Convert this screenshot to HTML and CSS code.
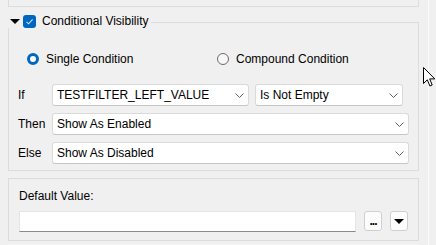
FILE: index.html
```html
<!DOCTYPE html>
<html>
<head>
    <title>Conditional Visibility</title>
    <link rel="stylesheet" href="styles.css">
</head>
<body>

<div class="panel">
    <div class="top-box"></div>

    <div class="group">
        <div class="group-head">
            <span class="caret"></span>
            <span class="check">
                <svg width="13" height="13" viewBox="0 0 13 13"><path d="M3.5 6.8 L5.6 8.8 L9.6 4.4" fill="none" stroke="#cfe3f7" stroke-width="1.1"/></svg>
            </span>
            <span class="group-title">Conditional Visibility</span>
            <span class="head-line"></span>
        </div>
        <div class="group-body">
            <div class="radios">
                <label class="radio-item"><span class="radio on"></span>Single Condition</label>
                <label class="radio-item"><span class="radio"></span>Compound Condition</label>
            </div>

            <div class="row">
                <span class="row-label">If</span>
                <div class="combo combo-left">
                    <span>TESTFILTER_LEFT_VALUE</span>
                    <svg class="chev" width="9" height="5" viewBox="0 0 9 5"><path d="M0.5 0.5 L4.5 4.5 L8.5 0.5" fill="none" stroke="#606060" stroke-width="1"/></svg>
                </div>
                <div class="combo combo-op">
                    <span>Is Not Empty</span>
                    <svg class="chev" width="9" height="5" viewBox="0 0 9 5"><path d="M0.5 0.5 L4.5 4.5 L8.5 0.5" fill="none" stroke="#606060" stroke-width="1"/></svg>
                </div>
            </div>

            <div class="row">
                <span class="row-label">Then</span>
                <div class="combo combo-wide">
                    <span>Show As Enabled</span>
                    <svg class="chev" width="9" height="5" viewBox="0 0 9 5"><path d="M0.5 0.5 L4.5 4.5 L8.5 0.5" fill="none" stroke="#606060" stroke-width="1"/></svg>
                </div>
            </div>

            <div class="row">
                <span class="row-label">Else</span>
                <div class="combo combo-wide">
                    <span>Show As Disabled</span>
                    <svg class="chev" width="9" height="5" viewBox="0 0 9 5"><path d="M0.5 0.5 L4.5 4.5 L8.5 0.5" fill="none" stroke="#606060" stroke-width="1"/></svg>
                </div>
            </div>
        </div>
    </div>

    <div class="group2">
        <div class="field-label">Default Value:</div>
        <div class="field-row">
            <div class="textbox"></div>
            <button class="small-btn dots">...</button>
            <button class="small-btn"><span class="down"></span></button>
        </div>
    </div>
</div>

<svg class="cursor" width="13" height="21" viewBox="0 0 13 21">
    <path d="M0.5 0.5 L0.5 16.5 L4.3 12.8 L6.9 19 L9.2 18 L6.7 11.9 L11.8 11.9 Z" fill="#fff" stroke="#000" stroke-width="1" stroke-linejoin="miter"/>
</svg>

</body>
</html>
```

FILE: styles.css
```css
body {
    margin: 0;
    background-color: #f0f0f0;
    font-family: "Liberation Sans", Arial, sans-serif;
    font-size: 12px;
    color: #000;
}

.panel {
    box-sizing: border-box;
    width: 429px;
    height: 245px;
    padding-left: 8px;
    border-right: 1px solid #fbfbfb;
}

.top-box {
    box-sizing: border-box;
    width: 411px;
    height: 7px;
    border: 1px solid #dcdcdc;
    border-top: none;
}

/* conditional visibility group */
.group {
    margin-top: 8px;
    width: 411px;
}

.group-head {
    display: flex;
    align-items: center;
    height: 13px;
    line-height: 13px;
}

.caret {
    width: 0;
    height: 0;
    margin-left: 2px;
    border-left: 5px solid transparent;
    border-right: 5px solid transparent;
    border-top: 5px solid #000;
}

.check {
    display: block;
    width: 13px;
    height: 13px;
    margin-left: 3px;
    border-radius: 3px;
    background-color: #0067c0;
}

.check svg {
    display: block;
}

.group-title {
    margin-left: 6px;
}

.head-line {
    box-sizing: border-box;
    flex: 1;
    align-self: flex-end;
    height: 6px;
    margin-left: 2px;
    border-top: 1px solid #dcdcdc;
    border-right: 1px solid #dcdcdc;
}

.group-body {
    box-sizing: border-box;
    height: 143px;
    border: 1px solid #dcdcdc;
    border-top: none;
}

.radios {
    display: flex;
    padding-top: 23px;
    padding-left: 18px;
    height: 16px;
    line-height: 16px;
}

.radio-item {
    display: flex;
    align-items: center;
    width: 190px;
}

.radio {
    box-sizing: border-box;
    width: 12px;
    height: 12px;
    margin-right: 7px;
    border-radius: 50%;
    border: 1px solid #6b6b6b;
    background-color: #f7f7f7;
}

.radio.on {
    border: 3.5px solid #0067c0;
    background-color: #fff;
}

.row {
    display: flex;
    align-items: center;
    margin-top: 7px;
    padding-left: 9px;
    height: 22px;
}

.radios + .row {
    margin-top: 17px;
}

.row-label {
    width: 34px;
}

.combo {
    box-sizing: border-box;
    display: flex;
    align-items: center;
    justify-content: space-between;
    height: 22px;
    padding-left: 4px;
    background-color: #fff;
    border: 1px solid #dadada;
    border-bottom-color: #c6c6c6;
    border-radius: 3px;
}

.chev {
    margin-right: 4px;
}

.combo-left {
    width: 197px;
}

.combo-op {
    width: 148px;
    margin-left: 6px;
}

.combo-wide {
    width: 357px;
}

/* default value group */
.group2 {
    box-sizing: border-box;
    width: 411px;
    height: 63px;
    margin-top: 7px;
    padding-top: 9px;
    padding-left: 10px;
    border: 1px solid #dcdcdc;
}

.field-label {
    line-height: 16px;
}

.field-row {
    display: flex;
    align-items: flex-start;
    margin-top: 7px;
}

.textbox {
    box-sizing: border-box;
    width: 337px;
    height: 21px;
    background-color: #fff;
    border: 1px solid #e4e4e4;
    border-bottom-color: #8a8a8a;
}

.small-btn {
    box-sizing: border-box;
    width: 18px;
    height: 20px;
    margin-left: 8px;
    padding: 0;
    background-color: #fcfcfc;
    border: 1px solid #d0d0d0;
    border-radius: 3px;
    font-family: "Liberation Sans", Arial, sans-serif;
    font-size: 12px;
    display: flex;
    align-items: center;
    justify-content: center;
}

.dots {
    align-items: flex-end;
    line-height: 12px;
    padding-bottom: 3px;
    font-weight: bold;
    letter-spacing: -1px;
}

.down {
    width: 0;
    height: 0;
    border-left: 5px solid transparent;
    border-right: 5px solid transparent;
    border-top: 5px solid #000;
}

.cursor {
    position: absolute;
    left: 423px;
    top: 67px;
}
```
